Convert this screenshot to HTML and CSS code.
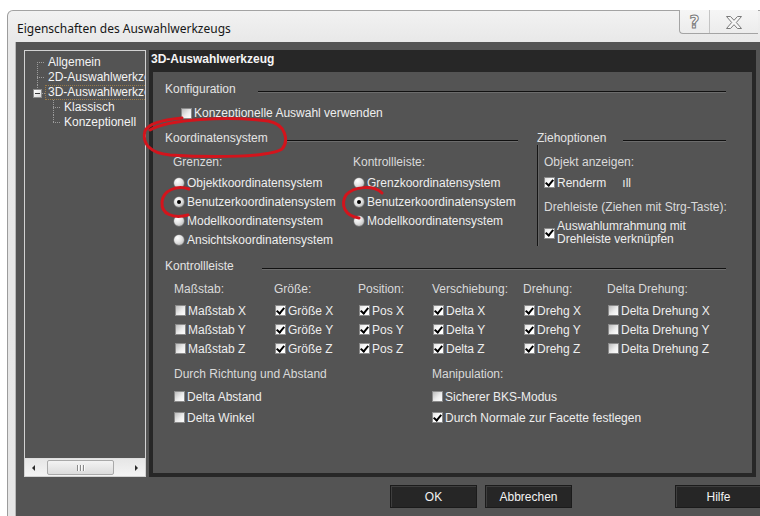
FILE: index.html
```html
<!DOCTYPE html>
<html lang="de">
<head>
<meta charset="utf-8">
<title>Eigenschaften des Auswahlwerkzeugs</title>
<link rel="stylesheet" href="styles.css">
</head>
<body>
<div class="window">
  <div class="titlebar">
    <span class="title">Eigenschaften des Auswahlwerkzeugs</span>
    <div class="caption-btns">
      <span class="cbtn cbtn-help">?</span>
      <span class="cbtn cbtn-close">
        <svg width="16" height="13" viewBox="0 0 16 13"><polygon points="0.5,0.5 4.5,0.5 8,4.3 11.5,0.5 15.5,0.5 10.3,6.5 15.5,12.5 11.5,12.5 8,8.7 4.5,12.5 0.5,12.5 5.7,6.5" fill="#f7f7f7" stroke="#7a7a7a" stroke-width="1"/></svg>
      </span>
    </div>
  </div>

  <div class="client">
    <div class="main">
      <div class="tree">
        <div class="tree-items">
          <div class="node"><span class="tw tw-first"></span><span class="lbl">Allgemein</span></div>
          <div class="node"><span class="tw tw-mid"></span><span class="lbl">2D-Auswahlwerkzeug</span></div>
          <div class="node"><span class="tw tw-open"><span class="expander"></span></span><span class="lbl sel">3D-Auswahlwerkzeug</span></div>
          <div class="node sub"><span class="tw tw-mid"></span><span class="lbl">Klassisch</span></div>
          <div class="node sub"><span class="tw tw-last"></span><span class="lbl">Konzeptionell</span></div>
        </div>
        <div class="hscroll">
          <span class="sb-btn"><span class="arr arr-l"></span></span>
          <span class="sb-track"><span class="sb-thumb"><span class="grip"></span><span class="grip"></span><span class="grip"></span></span></span>
          <span class="sb-btn"><span class="arr arr-r"></span></span>
        </div>
      </div>

      <div class="panel">
        <div class="panel-head">3D-Auswahlwerkzeug</div>
        <div class="panel-body">

          <div class="sec-head"><span class="sec-lbl w-konf">Konfiguration</span><span class="rule"></span></div>
          <div class="opt opt-konz"><span class="cb"></span><span>Konzeptionelle Auswahl verwenden</span></div>

          <div class="koord">
            <div class="fs-left">
              <div class="sec-head"><span class="sec-lbl w-koord">Koordinatensystem</span><span class="rule"></span></div>
              <div class="radio-cols">
                <div class="rcol rcol-1">
                  <div class="sub-lbl">Grenzen:</div>
                  <div class="radios">
                    <div class="ro"><span class="rb"></span><span>Objektkoordinatensystem</span></div>
                    <div class="ro"><span class="rb on"></span><span>Benutzerkoordinatensystem</span></div>
                    <div class="ro"><span class="rb"></span><span>Modellkoordinatensystem</span></div>
                    <div class="ro"><span class="rb"></span><span>Ansichtskoordinatensystem</span></div>
                  </div>
                </div>
                <div class="rcol">
                  <div class="sub-lbl">Kontrollleiste:</div>
                  <div class="radios">
                    <div class="ro"><span class="rb"></span><span>Grenzkoordinatensystem</span></div>
                    <div class="ro"><span class="rb on"></span><span>Benutzerkoordinatensystem</span></div>
                    <div class="ro"><span class="rb"></span><span>Modellkoordinatensystem</span></div>
                  </div>
                </div>
              </div>
            </div>
            <div class="fs-right">
              <div class="sec-head"><span class="sec-lbl w-zieh">Ziehoptionen</span><span class="rule"></span></div>
              <div class="zieh-body">
                <div class="sub-lbl">Objekt anzeigen:</div>
                <div class="opt opt-render"><span class="cb on"></span><span>Renderm</span><span class="tail">ıll</span></div>
                <div class="sub-lbl sub-dreh">Drehleiste (Ziehen mit Strg-Taste):</div>
                <div class="opt opt-wrap"><span class="cb on"></span><span class="two-line">Auswahlumrahmung mit<br>Drehleiste verknüpfen</span></div>
              </div>
            </div>
          </div>

          <div class="sec-head sec-ctrl"><span class="sec-lbl w-ctrl">Kontrollleiste</span><span class="rule"></span></div>
          <div class="ctrl-grid">
            <div class="col-h">Maßstab:</div>
            <div class="opt"><span class="cb"></span><span>Maßstab X</span></div>
            <div class="opt"><span class="cb"></span><span>Maßstab Y</span></div>
            <div class="opt"><span class="cb"></span><span>Maßstab Z</span></div>

            <div class="col-h">Größe:</div>
            <div class="opt"><span class="cb on"></span><span>Größe X</span></div>
            <div class="opt"><span class="cb on"></span><span>Größe Y</span></div>
            <div class="opt"><span class="cb on"></span><span>Größe Z</span></div>

            <div class="col-h">Position:</div>
            <div class="opt"><span class="cb on"></span><span>Pos X</span></div>
            <div class="opt"><span class="cb on"></span><span>Pos Y</span></div>
            <div class="opt"><span class="cb on"></span><span>Pos Z</span></div>

            <div class="col-h">Verschiebung:</div>
            <div class="opt"><span class="cb on"></span><span>Delta X</span></div>
            <div class="opt"><span class="cb on"></span><span>Delta Y</span></div>
            <div class="opt"><span class="cb on"></span><span>Delta Z</span></div>

            <div class="col-h">Drehung:</div>
            <div class="opt"><span class="cb on"></span><span>Drehg X</span></div>
            <div class="opt"><span class="cb on"></span><span>Drehg Y</span></div>
            <div class="opt"><span class="cb on"></span><span>Drehg Z</span></div>

            <div class="col-h">Delta Drehung:</div>
            <div class="opt"><span class="cb"></span><span>Delta Drehung X</span></div>
            <div class="opt"><span class="cb"></span><span>Delta Drehung Y</span></div>
            <div class="opt"><span class="cb"></span><span>Delta Drehung Z</span></div>
          </div>

          <div class="lower">
            <div class="lower-left">
              <div class="col-h">Durch Richtung und Abstand</div>
              <div class="opt opt-tall"><span class="cb"></span><span>Delta Abstand</span></div>
              <div class="opt opt-tall"><span class="cb"></span><span>Delta Winkel</span></div>
            </div>
            <div class="lower-right">
              <div class="col-h">Manipulation:</div>
              <div class="opt opt-tall"><span class="cb"></span><span>Sicherer BKS-Modus</span></div>
              <div class="opt opt-tall"><span class="cb on"></span><span>Durch Normale zur Facette festlegen</span></div>
            </div>
          </div>

        </div>
      </div>
    </div>

    <div class="actions">
      <span class="btn">OK</span>
      <span class="btn">Abbrechen</span>
      <span class="btn btn-help">Hilfe</span>
    </div>
  </div>
</div>

<svg class="marks" width="760" height="516" viewBox="0 0 760 516">
  <path d="M150 130 C168 119, 228 116, 268 121 C286 124, 289 141, 282 149 C270 157, 215 158, 170 155 C149 153, 142 143, 145 131 C148 124, 160 120, 182 118" />
  <path d="M189 189 C177 185, 163 190, 162 202 C161 214, 173 219, 188 215" />
  <path d="M382 193 C374 185, 354 186, 346 195 C340 205, 345 216, 359 218" />
</svg>
</body>
</html>
```

FILE: styles.css
```css
* { box-sizing: border-box; }

html, body { margin: 0; }

body {
  position: relative;
  width: 760px;
  height: 516px;
  overflow: hidden;
  background: #ffffff;
  font: 12px/14px "Liberation Sans", Arial, sans-serif;
  color: #e6e6e6;
}

/* ---- window frame ---- */
.window {
  margin: 10px 0 0 7px;
  width: 770px;
  height: 520px;
  display: flex;
  flex-direction: column;
  border-top: 1px solid #a3a3a3;
  border-left: 1px solid #9c9c9c;
  border-top-left-radius: 6px;
  background: linear-gradient(#f2f2f2, #e8e8e8 31px, #e6e6e6);
}

.titlebar {
  flex: none;
  height: 31px;
  display: flex;
  align-items: flex-start;
}

.title {
  padding: 9px 0 0 9px;
  font: 12px/17px "Noto Sans", "Liberation Sans", sans-serif;
  color: #161616;
}

.caption-btns {
  margin-left: auto;
  margin-right: 19px;
  margin-top: -1px;
  display: flex;
  height: 24px;
  border-left: 1px solid #a4a4a4;
  border-bottom: 1px solid #a4a4a4;
  border-bottom-left-radius: 4px;
  background: linear-gradient(#f6f6f6, #ececec);
}

.cbtn {
  display: flex;
  align-items: center;
  justify-content: center;
}

.cbtn-help {
  width: 30px;
  border-right: 1px solid #c4c4c4;
  font: bold 17px/17px "DejaVu Sans", sans-serif;
  color: #fafafa;
  -webkit-text-stroke: 1px #7a7a7a;
  padding-top: 1px;
}

.cbtn-close { width: 48px; padding-top: 1px; }

/* ---- client area ---- */
.client {
  flex: 1;
  margin-left: 7px;
  border-left: 1px solid #b8b8b8;
  background: #545454;
  padding: 8px 0 0 8px;
}

.main {
  display: flex;
  gap: 3px;
  height: 427px;
}

/* ---- navigation tree ---- */
.tree {
  width: 122px;
  display: flex;
  flex-direction: column;
  border: 1px solid #d2d2d2;
  background: #545454;
}

.tree-items {
  flex: 1;
  padding-top: 4px;
  overflow: hidden;
}

.node {
  display: flex;
  height: 15px;
  white-space: nowrap;
  color: #f3f3f3;
}

.node.sub { padding-left: 16px; }

.tw {
  flex: none;
  width: 20px;
  height: 15px;
}

.tw-first {
  background:
    repeating-linear-gradient(to bottom, #9c9c9c 0 1px, transparent 1px 2px) 12px 7px / 1px 8px no-repeat,
    repeating-linear-gradient(to right, #9c9c9c 0 1px, transparent 1px 2px) 12px 7px / 8px 1px no-repeat;
}

.tw-mid {
  background:
    repeating-linear-gradient(to bottom, #9c9c9c 0 1px, transparent 1px 2px) 12px 0 / 1px 15px no-repeat,
    repeating-linear-gradient(to right, #9c9c9c 0 1px, transparent 1px 2px) 12px 7px / 8px 1px no-repeat;
}

.tw-last {
  background:
    repeating-linear-gradient(to bottom, #9c9c9c 0 1px, transparent 1px 2px) 12px 0 / 1px 8px no-repeat,
    repeating-linear-gradient(to right, #9c9c9c 0 1px, transparent 1px 2px) 12px 7px / 8px 1px no-repeat;
}

.tw-open {
  padding: 4px 0 0 8px;
  background:
    repeating-linear-gradient(to bottom, #9c9c9c 0 1px, transparent 1px 2px) 12px 0 / 1px 4px no-repeat,
    repeating-linear-gradient(to right, #9c9c9c 0 1px, transparent 1px 2px) 17px 8px / 3px 1px no-repeat;
}

.expander {
  display: flex;
  align-items: center;
  justify-content: center;
  width: 9px;
  height: 9px;
  border: 1px solid #8c8c8c;
  background: linear-gradient(135deg, #ffffff, #d8d8d8);
}

.expander::before {
  content: "";
  width: 5px;
  height: 1px;
  background: #3a3a3a;
}

.lbl {
  padding: 0 2px;
  border: 1px dotted transparent;
  line-height: 13px;
}

.lbl.sel { border-color: #9a7b4a; }

/* horizontal scroll bar */
.hscroll {
  flex: none;
  height: 18px;
  display: flex;
  background: linear-gradient(#e6e6e6, #f4f4f4);
  border-top: 1px solid #e0e0e0;
}

.sb-btn {
  width: 17px;
  display: flex;
  align-items: center;
  justify-content: center;
}

.arr {
  width: 0;
  height: 0;
  border-top: 3px solid transparent;
  border-bottom: 3px solid transparent;
}

.arr-l { border-right: 3px solid #2a2a2a; }
.arr-r { border-left: 3px solid #2a2a2a; }

.sb-track {
  flex: 1;
  display: flex;
  padding: 1px 0 1px 5px;
}

.sb-thumb {
  width: 67px;
  display: flex;
  align-items: center;
  justify-content: center;
  gap: 2px;
  border: 1px solid #a9a9a9;
  border-radius: 2px;
  background: linear-gradient(#f3f3f3, #dcdcdc);
}

.grip {
  width: 1px;
  height: 6px;
  background: #8a8a8a;
  box-shadow: 1px 0 #fbfbfb;
}

/* ---- property panel ---- */
.panel {
  width: 607px;
  display: flex;
  flex-direction: column;
  background: #272727;
}

.panel-head {
  height: 22px;
  padding: 2px 0 0 2px;
  line-height: 14px;
  font-weight: bold;
  color: #f5f5f5;
}

.panel-body {
  flex: 1;
  margin: 0 4px 4px;
  padding: 10px 26px 0 12px;
  background: #545454;
}

.sec-head {
  display: flex;
  height: 14px;
}

.sec-lbl {
  flex: none;
  color: #e4e4e4;
}

.w-konf { width: 93px; }
.w-koord { width: 120px; }
.w-zieh { width: 86px; }
.w-ctrl { width: 97px; }

.rule {
  flex: 1;
  height: 2px;
  margin-top: 9px;
  border-top: 1px solid #111111;
  border-bottom: 1px solid #6c6c6c;
}

.sub-lbl,
.col-h {
  height: 14px;
  color: #dadada;
  white-space: nowrap;
}

/* checkbox rows */
.opt {
  display: flex;
  align-items: center;
  gap: 2px;
  height: 19px;
  white-space: nowrap;
  color: #eeeeee;
}

.cb {
  flex: none;
  width: 11px;
  height: 11px;
  display: flex;
  align-items: center;
  justify-content: center;
  border: 1px solid #8a8a8a;
  background: linear-gradient(135deg, #bdbdbd, #ececec 55%, #ffffff);
}

.cb.on { background: linear-gradient(135deg, #e2e2e2, #ffffff 50%); }

.cb.on::after {
  content: "";
  width: 3px;
  height: 6px;
  margin-top: -2px;
  border: solid #000000;
  border-width: 0 2px 2px 0;
  transform: rotate(40deg);
}

.opt-konz {
  height: 14px;
  margin: 10px 0 0 16px;
}

/* coordinate system + drag options */
.koord {
  display: flex;
  align-items: flex-start;
  margin-top: 11px;
}

.fs-left { width: 353px; }

.fs-right {
  width: 189px;
  margin-left: 19px;
}

.radio-cols {
  display: flex;
  padding: 10px 0 0 8px;
}

.rcol-1 { width: 180px; }

.radios { margin-top: 4px; }

.ro {
  display: flex;
  align-items: center;
  gap: 3px;
  height: 19px;
  white-space: nowrap;
  color: #eeeeee;
}

.rb {
  flex: none;
  width: 10px;
  height: 10px;
  margin-left: 1px;
  display: flex;
  align-items: center;
  justify-content: center;
  border-radius: 50%;
  background: radial-gradient(circle at 35% 30%, #ffffff 0, #e4e4e4 45%, #a8a8a8 100%);
  box-shadow: 0 0 0 0.5px #8d8d8d;
}

.rb.on::after {
  content: "";
  width: 4px;
  height: 4px;
  border-radius: 50%;
  background: #000000;
}

.zieh-body {
  padding: 10px 0 0 6px;
  border-left: 1px solid #161616;
  box-shadow: inset 1px 0 #666666;
}

.opt-render { margin-top: 4px; }

.tail { margin-left: 14px; }

.sub-dreh { margin-top: 8px; }

.opt-wrap {
  height: 26px;
  margin-top: 6px;
}

.two-line { line-height: 13px; }

/* control bar options */
.sec-ctrl { margin-top: 10px; }

.ctrl-grid {
  display: grid;
  grid-auto-flow: column;
  grid-template-columns: 100px 84px 74px 91px 84px auto;
  grid-template-rows: auto repeat(3, 19px);
  margin: 9px 0 0 9px;
}

.ctrl-grid .col-h { margin-bottom: 5px; }

.ctrl-grid .cb { margin-left: 1px; }

.lower {
  display: flex;
  margin: 9px 0 0 9px;
}

.lower-left { width: 258px; }

.lower .col-h { margin-bottom: 5px; }

.opt-tall { height: 21px; }

/* ---- dialog buttons ---- */
.actions {
  display: flex;
  gap: 8px;
  margin-top: 8px;
  padding-left: 366px;
}

.btn {
  width: 87px;
  height: 23px;
  display: flex;
  align-items: center;
  justify-content: center;
  background: #262626;
  border: 1px solid #1b1b1b;
  box-shadow: inset 1px 1px #3e3e3e;
  color: #f2f2f2;
}

.btn-help { margin-left: 95px; }

/* ---- hand-drawn highlight strokes ---- */
.marks {
  position: absolute;
  left: 0;
  top: 0;
  pointer-events: none;
  fill: none;
  stroke: #d3141c;
  stroke-width: 3;
  stroke-linecap: round;
  stroke-linejoin: round;
}
```
